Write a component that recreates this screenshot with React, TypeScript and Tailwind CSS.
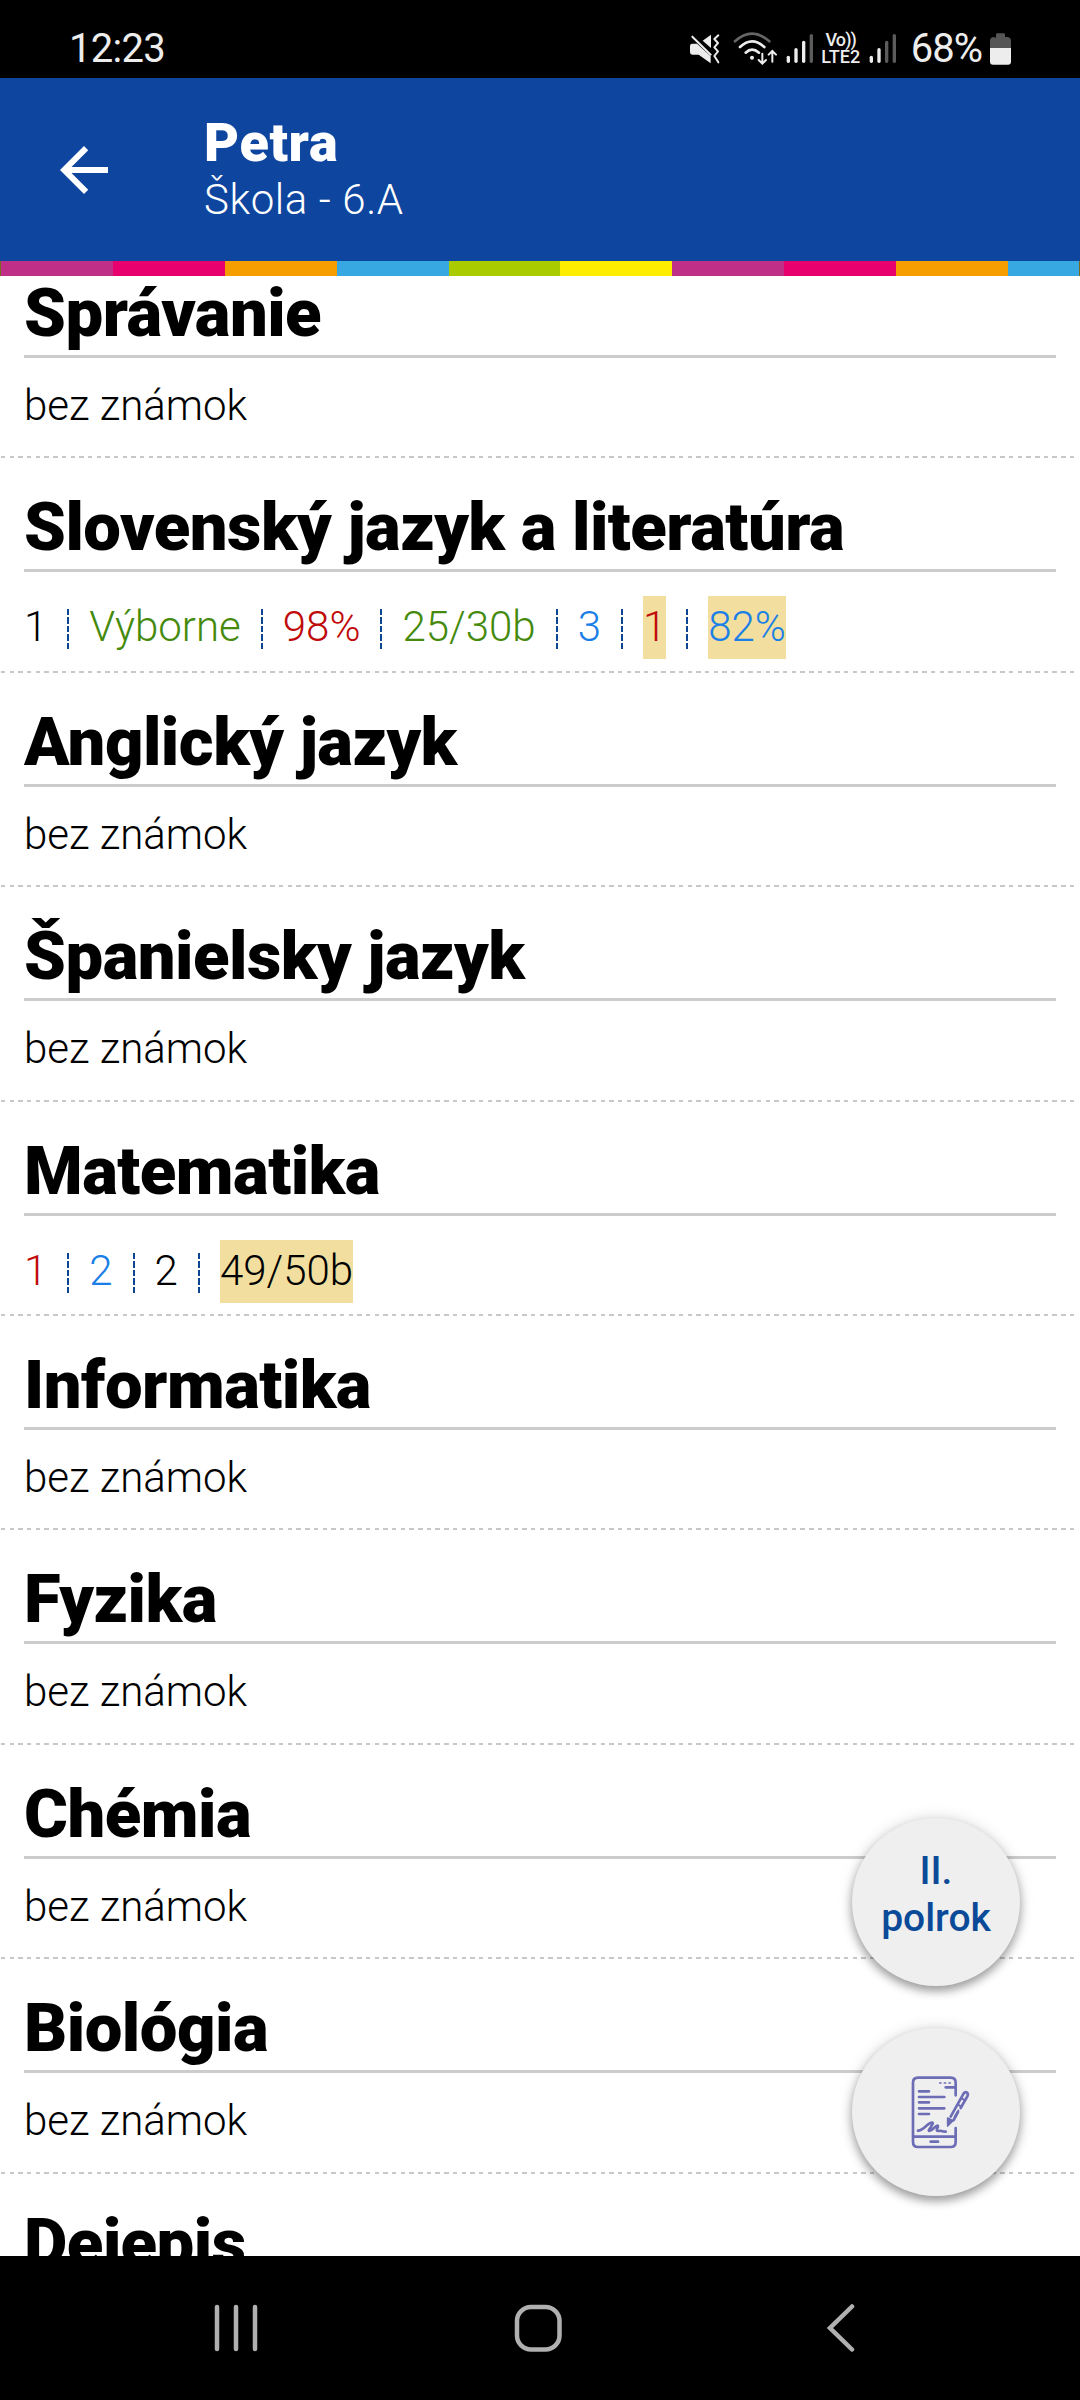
import clsx from "clsx";

type Grade = { value: string; color: string; marked?: boolean };
type Subject = { name: string; grades?: Grade[] };

const RED = "text-[#c00a0a]";
const GREEN = "text-[#458a0c]";
const BLUE = "text-[#1a7fe6]";
const BLACK = "text-black";

const subjects: Subject[] = [
  { name: "Správanie" },
  {
    name: "Slovenský jazyk a literatúra",
    grades: [
      { value: "1", color: BLACK },
      { value: "Výborne", color: GREEN },
      { value: "98%", color: RED },
      { value: "25/30b", color: GREEN },
      { value: "3", color: BLUE },
      { value: "1", color: RED, marked: true },
      { value: "82%", color: BLUE, marked: true },
    ],
  },
  { name: "Anglický jazyk" },
  { name: "Španielsky jazyk" },
  {
    name: "Matematika",
    grades: [
      { value: "1", color: RED },
      { value: "2", color: BLUE },
      { value: "2", color: BLACK },
      { value: "49/50b", color: BLACK, marked: true },
    ],
  },
  { name: "Informatika" },
  { name: "Fyzika" },
  { name: "Chémia" },
  { name: "Biológia" },
  { name: "Dejepis" },
];

const stripes = [
  "bg-[#bf2f87]",
  "bg-[#e9006f]",
  "bg-[#f69e00]",
  "bg-[#38a8e2]",
  "bg-[#aacb00]",
  "bg-[#ffed00]",
  "bg-[#bf2f87]",
  "bg-[#e9006f]",
  "bg-[#f69e00]",
  "bg-[#38a8e2]",
];

const MuteIcon = () => (
  <svg viewBox="84 90 96 105" className="h-[35px] w-8" fill="#ededed">
    <path d="M94 128H108L149 166V187L113 161H94Q87 161 87 154V135Q87 128 94 128Z" />
    <path d="M150 101V141L125 119Z" />
    <path
      d="M94 107L149 161M172 103L160 114L171 126L160 139L171 151L160 165L172 184"
      fill="none"
      stroke="#ededed"
      strokeWidth="6"
      strokeLinecap="round"
      strokeLinejoin="round"
    />
  </svg>
);

const WifiIcon = () => (
  <svg viewBox="216 90 135 105" className="h-[35px] w-[45px]" fill="none" stroke="#ededed" strokeWidth="8" strokeLinecap="round">
    <path d="M222 121Q273 75 325 121" stroke="#666" />
    <path d="M237 138Q273 104 310 138" />
    <path d="M254 155Q273 137 294 155" />
    <circle cx="273" cy="170" r="6" fill="#ededed" stroke="none" />
    <path d="M304 158V187M293 177L304 188L315 177M334 182V151M323 161L334 150L345 161" strokeWidth="6" />
  </svg>
);

const SignalIcon = ({ level }: { level: number }) => (
  <svg viewBox="0 0 84 105" className="h-[35px] w-7" strokeWidth="10" strokeLinecap="round">
    {[79, 56, 34, 14].map((top, i) => (
      <path key={top} d={`M${7 + i * 23} ${top}V91`} stroke={i < level ? "#ededed" : "#5c5c5c"} />
    ))}
  </svg>
);

const BatteryIcon = () => (
  <svg viewBox="990 90 63 105" className="h-[35px] w-[21px]">
    <path d="M1008 110V101Q1008 97 1012 97H1031Q1035 97 1035 101V108H1043Q1053 110 1053 120V141H990V120Q990 110 1000 108Z" fill="#555" />
    <path d="M990 141H1053V182Q1053 191 1044 191H999Q990 191 990 182Z" fill="#ededed" />
  </svg>
);

const SignIcon = () => (
  <svg viewBox="273 885 180 222" className="h-[74px] w-[60px]" fill="none" stroke="#6c6db5" strokeWidth="8" strokeLinecap="round" strokeLinejoin="round">
    <path d="M407 946V908Q407 893 392 893H294Q279 893 279 908V1086Q279 1101 294 1101H392Q407 1101 407 1086V1044" />
    <path d="M280 1070H406M332 1085H354M377 922H405" />
    <path d="M297 934H327M297 951H373M297 967H327M297 985H373M297 1002H327" />
    <path d="M359 909H363M373 909H377M387 909H391" strokeWidth="5" />
    <path d="M294 1052C312 1052 322 1028 336 1028C346 1028 320 1053 328 1053C338 1052 346 1036 353 1037C358 1040 342 1054 357 1053C364 1050 362 1055 377 1055" />
    <path d="M392 1010L429 944Q434 934 440 937Q446 941 442 949L422 984M414 996L401 1020" />
    <path d="M383 1014L399 1022L383 1038Z" fill="#6c6db5" strokeWidth="5" />
    <path d="M414 974L424 980M425 955L435 961M415 992L404 1010" strokeWidth="6" />
  </svg>
);

const StatusBar = () => (
  <div className="flex h-[78px] items-center bg-black pt-[18px] pr-[69px] pl-[69px] text-[#ededed]">
    <span className="pt-[2px] text-[40px] leading-none font-normal tracking-[-0.7px]">12:23</span>
    <div className="ml-auto flex items-center">
      <MuteIcon />
      <div className="ml-3">
        <WifiIcon />
      </div>
      <div className="ml-2">
        <SignalIcon level={3} />
      </div>
      <div className="ml-[7px] flex w-10 flex-col items-center text-[18px] leading-[17px] font-medium">
        <span className="tracking-tighter">Vo))</span>
        <span>LTE2</span>
      </div>
      <div className="ml-2">
        <SignalIcon level={2} />
      </div>
      <span className="ml-[14px] pt-[2px] text-[40px] leading-none font-normal tracking-[-1px]">68%</span>
      <div className="ml-[8px]">
        <BatteryIcon />
      </div>
    </div>
  </div>
);

const Header = () => (
  <header>
    <div className="flex h-[183px] items-center bg-[#0e469f] pl-12 text-white">
      <svg viewBox="0 0 24 24" className="size-[72px]" fill="currentColor">
        <path d="M20 11H7.83l5.59-5.59L12 4l-8 8 8 8 1.41-1.41L7.83 13H20v-2z" />
      </svg>
      <div className="ml-[84px] pt-[2px]">
        <h1 className="text-[54px] leading-[58px] font-black tracking-[0.6px]">Petra</h1>
        <p className="text-[42px] leading-[56px] font-light tracking-[0.6px]">Škola - 6.A</p>
      </div>
    </div>
    <div className="flex h-[15px] bg-[#7a6a20] px-px">
      {stripes.map((color, i) => (
        <div key={i} className={clsx("h-full", i === stripes.length - 1 ? "grow" : "w-[111.9px]", color)} />
      ))}
    </div>
  </header>
);

const Grades = ({ grades }: { grades: Grade[] }) => (
  <div className="flex pt-6">
    {grades.map((grade, i) => (
      <div key={i} className="flex">
        {i > 0 && (
          <div className="mx-5 mt-[13px] h-10 w-[2px] bg-[repeating-linear-gradient(180deg,#0d4690_0_6.5px,transparent_6.5px_8.4px)]" />
        )}
        <span className={clsx("h-[63px] text-[42px] leading-[61px]", grade.color, grade.marked && "bg-[#f2df9f]")}>
          {grade.value}
        </span>
      </div>
    ))}
  </div>
);

const SubjectRow = ({ subject }: { subject: Subject }) => (
  <section className="flex h-[214.4px] shrink-0 flex-col">
    <div className="mx-6 grow">
      <h2 className="border-b-[3px] border-[#ccc] pt-[28px] text-[67px] leading-[83px] font-black tracking-[-0.5px]">{subject.name}</h2>
      {subject.grades ? <Grades grades={subject.grades} /> : <p className="pt-6 text-[42px] leading-[48px]">bez známok</p>}
    </div>
    <div className="mr-1 ml-px h-[2px] bg-[repeating-linear-gradient(90deg,#c8c8c8_0_4.4px,transparent_4.4px_8.69px)]" />
  </section>
);

const fab =
  "flex size-[168px] flex-col items-center justify-center rounded-full bg-[#efefef] shadow-[0_5px_10px_rgba(0,0,0,0.35),0_0_16px_rgba(0,0,0,0.12)]";

const NavBar = () => (
  <nav className="flex h-36 items-center bg-black pl-[212px] text-[#b0b0b0]">
    <svg viewBox="0 0 48 48" className="size-12" fill="none" stroke="currentColor" strokeWidth="4.5" strokeLinecap="round">
      <path d="M5 3V45M24 3V45M43 3V45" />
    </svg>
    <svg viewBox="0 0 48 48" className="ml-[254px] size-12" fill="none" stroke="currentColor" strokeWidth="4.5">
      <rect x="3" y="3" width="42.5" height="42.5" rx="14" />
    </svg>
    <svg viewBox="0 0 30 48" className="ml-[264px] h-12 w-[30px]" fill="none" stroke="currentColor" strokeWidth="4.5" strokeLinecap="round">
      <path d="M26 2.5L4 24L26 45.5" />
    </svg>
  </nav>
);

export default function App() {
  return (
    <div className="flex h-[2400px] w-[1080px] flex-col overflow-hidden bg-white font-[Roboto,sans-serif]">
      <StatusBar />
      <Header />
      <main className="relative h-[1980px] overflow-hidden font-light text-black">
        <div className="-mt-[32px] flex flex-col">
          {subjects.map((subject) => (
            <SubjectRow key={subject.name} subject={subject} />
          ))}
        </div>
        <div className="absolute right-[60px] bottom-[60px] flex flex-col gap-[42px]">
          <button className={clsx(fab, "pb-[14px] text-[39px] leading-[47px] font-medium text-[#0b4a98]")}>
            <span>II.</span>
            <span>polrok</span>
          </button>
          <button className={clsx(fab, "pl-[9px]")}>
            <SignIcon />
          </button>
        </div>
      </main>
      <NavBar />
    </div>
  );
}
